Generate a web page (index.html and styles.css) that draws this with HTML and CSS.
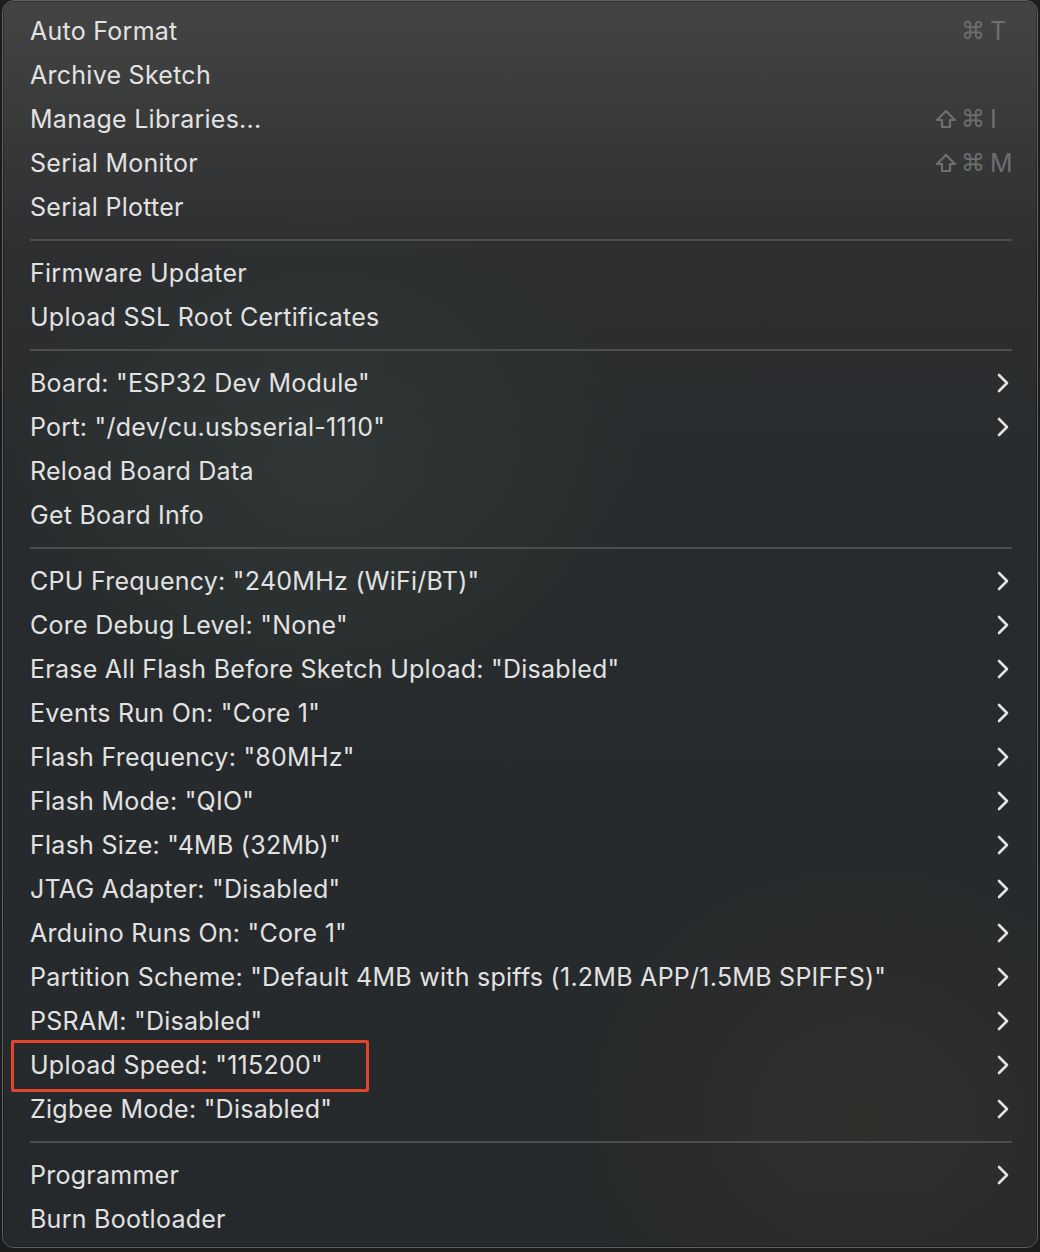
FILE: index.html
```html
<!DOCTYPE html>
<html lang="en">
<head>
<meta charset="utf-8">
<title>Tools menu</title>
<link rel="stylesheet" href="styles.css">
</head>
<body>
<div class="menu">
  <div class="item"><span class="label">Auto Format</span><span class="shortcut"><span class="mods"><span class="cmd">⌘</span></span><span class="key">T</span></span></div>
  <div class="item"><span class="label">Archive Sketch</span></div>
  <div class="item"><span class="label">Manage Libraries...</span><span class="shortcut"><span class="mods"><svg class="shift" viewBox="0 0 22 20"><path d="M11 2 L20 11 L15 11 L15 18 L7 18 L7 11 L2 11 Z"/></svg><span class="cmd">⌘</span></span><span class="key">I</span></span></div>
  <div class="item"><span class="label">Serial Monitor</span><span class="shortcut"><span class="mods"><svg class="shift" viewBox="0 0 22 20"><path d="M11 2 L20 11 L15 11 L15 18 L7 18 L7 11 L2 11 Z"/></svg><span class="cmd">⌘</span></span><span class="key">M</span></span></div>
  <div class="item"><span class="label">Serial Plotter</span></div>
  <div class="sep"></div>
  <div class="item"><span class="label">Firmware Updater</span></div>
  <div class="item"><span class="label">Upload SSL Root Certificates</span></div>
  <div class="sep"></div>
  <div class="item"><span class="label">Board: "ESP32 Dev Module"</span><svg class="chev" viewBox="0 0 12 20"><polyline points="2,2 10,10 2,18"/></svg></div>
  <div class="item"><span class="label">Port: "/dev/cu.usbserial-1110"</span><svg class="chev" viewBox="0 0 12 20"><polyline points="2,2 10,10 2,18"/></svg></div>
  <div class="item"><span class="label">Reload Board Data</span></div>
  <div class="item"><span class="label">Get Board Info</span></div>
  <div class="sep"></div>
  <div class="item"><span class="label">CPU Frequency: "240MHz (WiFi/BT)"</span><svg class="chev" viewBox="0 0 12 20"><polyline points="2,2 10,10 2,18"/></svg></div>
  <div class="item"><span class="label">Core Debug Level: "None"</span><svg class="chev" viewBox="0 0 12 20"><polyline points="2,2 10,10 2,18"/></svg></div>
  <div class="item"><span class="label">Erase All Flash Before Sketch Upload: "Disabled"</span><svg class="chev" viewBox="0 0 12 20"><polyline points="2,2 10,10 2,18"/></svg></div>
  <div class="item"><span class="label">Events Run On: "Core 1"</span><svg class="chev" viewBox="0 0 12 20"><polyline points="2,2 10,10 2,18"/></svg></div>
  <div class="item"><span class="label">Flash Frequency: "80MHz"</span><svg class="chev" viewBox="0 0 12 20"><polyline points="2,2 10,10 2,18"/></svg></div>
  <div class="item"><span class="label">Flash Mode: "QIO"</span><svg class="chev" viewBox="0 0 12 20"><polyline points="2,2 10,10 2,18"/></svg></div>
  <div class="item"><span class="label">Flash Size: "4MB (32Mb)"</span><svg class="chev" viewBox="0 0 12 20"><polyline points="2,2 10,10 2,18"/></svg></div>
  <div class="item"><span class="label">JTAG Adapter: "Disabled"</span><svg class="chev" viewBox="0 0 12 20"><polyline points="2,2 10,10 2,18"/></svg></div>
  <div class="item"><span class="label">Arduino Runs On: "Core 1"</span><svg class="chev" viewBox="0 0 12 20"><polyline points="2,2 10,10 2,18"/></svg></div>
  <div class="item"><span class="label">Partition Scheme: "Default 4MB with spiffs (1.2MB APP/1.5MB SPIFFS)"</span><svg class="chev" viewBox="0 0 12 20"><polyline points="2,2 10,10 2,18"/></svg></div>
  <div class="item"><span class="label">PSRAM: "Disabled"</span><svg class="chev" viewBox="0 0 12 20"><polyline points="2,2 10,10 2,18"/></svg></div>
  <div class="item marked"><span class="label">Upload Speed: "115200"</span><span class="highlight"></span><svg class="chev" viewBox="0 0 12 20"><polyline points="2,2 10,10 2,18"/></svg></div>
  <div class="item"><span class="label">Zigbee Mode: "Disabled"</span><svg class="chev" viewBox="0 0 12 20"><polyline points="2,2 10,10 2,18"/></svg></div>
  <div class="sep"></div>
  <div class="item"><span class="label">Programmer</span><svg class="chev" viewBox="0 0 12 20"><polyline points="2,2 10,10 2,18"/></svg></div>
  <div class="item"><span class="label">Burn Bootloader</span></div>
</div>
</body>
</html>
```

FILE: styles.css
```css
html, body {
  margin: 0;
  padding: 0;
}
body {
  background: #1b1c1d;
  width: 1040px;
  height: 1252px;
  overflow: hidden;
  font-family: "Inter", "Noto Sans", "DejaVu Sans", sans-serif;
}
.menu {
  box-sizing: border-box;
  margin-left: 2px;
  width: 1036px;
  height: 1248px;
  padding: 8px 0 7px 0;
  border: 1px solid #5e5f60;
  border-radius: 12px;
  background:
    radial-gradient(ellipse 320px 260px at 320px 470px, rgba(70, 95, 80, 0.22), rgba(70, 95, 80, 0) 100%),
    radial-gradient(ellipse 300px 260px at 860px 1120px, rgba(80, 70, 50, 0.22), rgba(80, 70, 50, 0) 100%),
    linear-gradient(180deg, #444444 0px, #383939 130px, #2c2e30 260px, #282b2d 560px, #26292b 1248px);
  box-shadow: inset 0 0 0 1px rgba(0, 0, 0, 0.25);
}
.item {
  position: relative;
  display: flex;
  align-items: center;
  justify-content: space-between;
  height: 44px;
  padding: 0 28px 0 27px;
  color: #e2e2e2;
  font-size: 25px;
  letter-spacing: 0.26px;
}
.label {
  white-space: nowrap;
}
.shortcut {
  display: flex;
  align-items: center;
  color: #6d6e6f;
  margin-right: -5px;
}
.mods {
  display: flex;
  align-items: center;
  gap: 4px;
}
.cmd {
  font-family: "DejaVu Sans", sans-serif;
  font-size: 24px;
  line-height: 1;
  letter-spacing: 0;
}
.shift {
  width: 22px;
  height: 20px;
}
.shift path {
  fill: none;
  stroke: #6d6e6f;
  stroke-width: 2.2;
  stroke-linejoin: round;
}
.key {
  width: 24px;
  margin-left: 5px;
  letter-spacing: 0;
}
.chev {
  width: 12px;
  height: 20px;
  flex: none;
}
.chev polyline {
  fill: none;
  stroke: #e2e2e2;
  stroke-width: 2.6;
  stroke-linecap: round;
  stroke-linejoin: round;
}
.sep {
  height: 22px;
  display: flex;
  align-items: center;
  padding: 0 25px 0 27px;
}
.sep::before {
  content: "";
  display: block;
  flex: 1;
  height: 2px;
  background: #4b4d4f;
}
.highlight {
  position: absolute;
  left: 8px;
  top: -3px;
  width: 358px;
  height: 52px;
  box-sizing: border-box;
  border: 3px solid #e4442a;
  border-radius: 2px;
  pointer-events: none;
}
```
